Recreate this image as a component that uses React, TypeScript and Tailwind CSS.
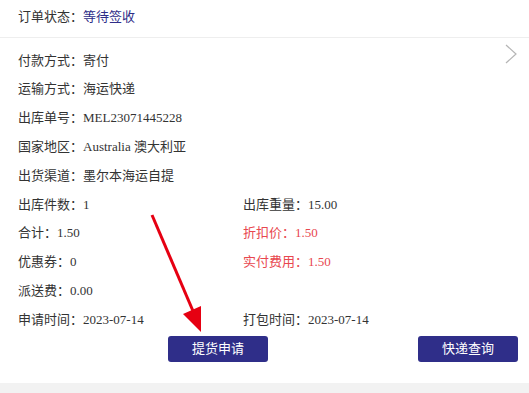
import React from "react";

const font = { fontFamily: '"Liberation Serif", "Noto Sans CJK SC", serif' };

function Row({ label, value, red }: { label: string; value: string; red?: boolean }) {
  return (
    <div className={`h-[28.8px] flex items-center whitespace-nowrap ${red ? "text-[#e8474f]" : "text-[#333]"}`}>
      <span>
        {label}
        <span className="inline-block w-[13px]">：</span>
        {value}
      </span>
    </div>
  );
}

export default function App() {
  return (
    <div className="relative w-[529px] h-[393px] bg-white text-[13px] overflow-hidden [text-spacing-trim:space-all]" style={font}>
      <div className="h-[38px] border-b border-[#eeeeee] flex items-center pl-[18px] pb-[4px] text-[#333] whitespace-nowrap">
        <span>
          订单状态<span className="inline-block w-[13px]">：</span>
          <span className="text-[#2e2d88]">等待签收</span>
        </span>
      </div>
      <div className="relative pt-[8px]">
        <svg className="absolute right-[12px] top-[6px]" width="12" height="20" viewBox="0 0 12 20">
          <path d="M1 1 L11 10 L1 19" fill="none" stroke="#b5b5b5" strokeWidth="1.2" />
        </svg>
        <div className="pl-[18px]">
          <Row label="付款方式" value="寄付" />
          <Row label="运输方式" value="海运快递" />
          <Row label="出库单号" value="MEL23071445228" />
          <Row label="国家地区" value="Australia 澳大利亚" />
          <Row label="出货渠道" value="墨尔本海运自提" />
          <div className="grid grid-cols-[225px_1fr]">
            <Row label="出库件数" value="1" />
            <Row label="出库重量" value="15.00" />
            <Row label="合计" value="1.50" />
            <Row label="折扣价" value="1.50" red />
            <Row label="优惠券" value="0" />
            <Row label="实付费用" value="1.50" red />
            <Row label="派送费" value="0.00" />
            <div />
            <Row label="申请时间" value="2023-07-14" />
            <Row label="打包时间" value="2023-07-14" />
          </div>
        </div>
        <div className="grid grid-cols-2 pl-[18px] pr-[11px] pt-[2px]">
          <button className="justify-self-end w-[100px] h-[26px] rounded-[3px] bg-[#2f2e89] text-white text-[13px]">提货申请</button>
          <button className="justify-self-end w-[100px] h-[26px] rounded-[3px] bg-[#2f2e89] text-white text-[13px]">快递查询</button>
        </div>
      </div>
      <div className="absolute left-0 right-0 bottom-0 h-[10px] bg-[#f2f2f2]" />
      <svg className="absolute left-0 top-0 pointer-events-none" width="529" height="393">
        <line x1="152" y1="215" x2="193" y2="311" stroke="#e60012" strokeWidth="3" />
        <polygon points="183,314 201,306 201,332" fill="#e60012" />
      </svg>
    </div>
  );
}
